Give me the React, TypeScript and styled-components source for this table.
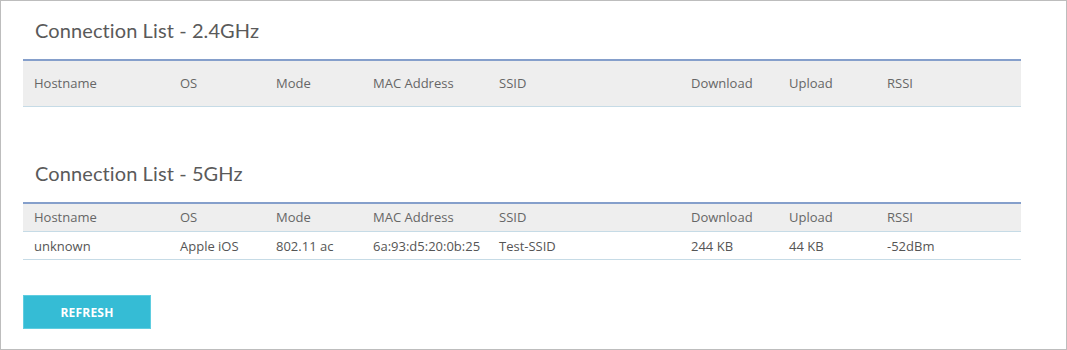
import React from 'react';
import styled, { createGlobalStyle } from 'styled-components';

const GlobalStyle = createGlobalStyle`
  html, body {
    margin: 0;
    padding: 0;
    background: #ffffff;
  }
  body {
    font-family: 'Open Sans', 'Liberation Sans', sans-serif;
  }
`;

type Client = {
  hostname: string;
  os: string;
  mode: string;
  mac: string;
  ssid: string;
  download: string;
  upload: string;
  rssi: string;
};

// column widths of the connection tables
const columns: { key: keyof Client; label: string; width: number }[] = [
  { key: 'hostname', label: 'Hostname', width: 146 },
  { key: 'os', label: 'OS', width: 96 },
  { key: 'mode', label: 'Mode', width: 97 },
  { key: 'mac', label: 'MAC Address', width: 126 },
  { key: 'ssid', label: 'SSID', width: 192 },
  { key: 'download', label: 'Download', width: 98 },
  { key: 'upload', label: 'Upload', width: 98 },
  { key: 'rssi', label: 'RSSI', width: 145 },
];

const clients24: Client[] = [];

const clients5: Client[] = [
  {
    hostname: 'unknown',
    os: 'Apple iOS',
    mode: '802.11 ac',
    mac: '6a:93:d5:20:0b:25',
    ssid: 'Test-SSID',
    download: '244 KB',
    upload: '44 KB',
    rssi: '-52dBm',
  },
];

const Page = styled.div`
  box-sizing: border-box;
  width: 1067px;
  height: 350px;
  border: 1px solid #bdbdbd;
  padding: 17px 45px 0 22px;
  display: flex;
  flex-direction: column;
`;

const Section = styled.section<{ $gap: number }>`
  display: flex;
  flex-direction: column;
  margin-bottom: ${(p) => p.$gap}px;
`;

const Title = styled.h2`
  margin: 0 0 17px 12px;
  font-family: 'Lato', 'Open Sans', sans-serif;
  font-weight: 400;
  font-size: 20px;
  line-height: 24px;
  color: #5a5a5a;
  letter-spacing: 0.1px;
`;

const Table = styled.table`
  width: 998px;
  border-collapse: collapse;
  table-layout: fixed;
  border-top: 2px solid #859fcb;
  font-size: 13px;
`;

const HeadRow = styled.tr<{ $tall: boolean }>`
  background: #eeeeee;
  height: ${(p) => (p.$tall ? 46 : 29)}px;
  border-bottom: 1px solid #c6dbe6;
`;

const Th = styled.th`
  text-align: left;
  font-weight: 400;
  color: #666666;
  padding: 0 0 0 11px;
  white-space: nowrap;
`;

const Row = styled.tr`
  height: 28px;
  border-bottom: 1px solid #c6dbe6;
`;

const Td = styled.td`
  padding: 0 0 0 11px;
  color: #555555;
  white-space: nowrap;
`;

const RefreshButton = styled.button`
  width: 128px;
  height: 34px;
  margin-left: 0;
  border: 1px solid #5fcde0;
  background: #35bcd5;
  color: #ffffff;
  font-family: 'Open Sans', sans-serif;
  font-weight: 700;
  font-size: 12px;
  letter-spacing: 0.2px;
  cursor: pointer;
  align-self: flex-start;
`;

function ConnectionTable({ clients }: { clients: Client[] }) {
  return (
    <Table>
      <colgroup>
        {columns.map((c) => (
          <col key={c.key} style={{ width: c.width }} />
        ))}
      </colgroup>
      <thead>
        <HeadRow $tall={clients.length === 0}>
          {columns.map((c) => (
            <Th key={c.key}>{c.label}</Th>
          ))}
        </HeadRow>
      </thead>
      <tbody>
        {clients.map((cl) => (
          <Row key={cl.mac}>
            {columns.map((c) => (
              <Td key={c.key}>{cl[c.key]}</Td>
            ))}
          </Row>
        ))}
      </tbody>
    </Table>
  );
}

export default function App() {
  return (
    <>
      <GlobalStyle />
      <Page>
        <Section $gap={54}>
          <Title>Connection List - 2.4GHz</Title>
          <ConnectionTable clients={clients24} />
        </Section>
        <Section $gap={35}>
          <Title>Connection List - 5GHz</Title>
          <ConnectionTable clients={clients5} />
        </Section>
        <RefreshButton>REFRESH</RefreshButton>
      </Page>
    </>
  );
}
